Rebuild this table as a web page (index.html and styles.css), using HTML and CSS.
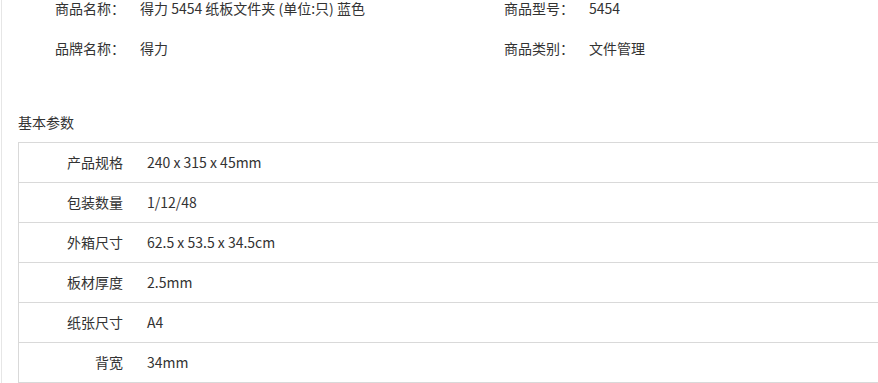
FILE: index.html
```html
<!DOCTYPE html>
<html lang="zh">
<head>
<meta charset="utf-8">
<link rel="stylesheet" href="styles.css">
</head>
<body>
<div class="page">
  <div class="info">
    <div class="info-row">
      <div class="info-item left"><span class="info-label">商品名称：</span><span class="info-value">得力 5454 纸板文件夹 (单位:只) 蓝色</span></div>
      <div class="info-item right"><span class="info-label">商品型号：</span><span class="info-value">5454</span></div>
    </div>
    <div class="info-row">
      <div class="info-item left"><span class="info-label">品牌名称：</span><span class="info-value">得力</span></div>
      <div class="info-item right"><span class="info-label">商品类别：</span><span class="info-value">文件管理</span></div>
    </div>
  </div>
  <div class="section-title">基本参数</div>
  <div class="params">
    <div class="param-row"><div class="param-label">产品规格</div><div class="param-value">240 x 315 x 45mm</div></div>
    <div class="param-row"><div class="param-label">包装数量</div><div class="param-value">1/12/48</div></div>
    <div class="param-row"><div class="param-label">外箱尺寸</div><div class="param-value">62.5 x 53.5 x 34.5cm</div></div>
    <div class="param-row"><div class="param-label">板材厚度</div><div class="param-value">2.5mm</div></div>
    <div class="param-row"><div class="param-label">纸张尺寸</div><div class="param-value">A4</div></div>
    <div class="param-row"><div class="param-label">背宽</div><div class="param-value">34mm</div></div>
  </div>
</div>
</body>
</html>
```
FILE: styles.css
```css
html, body {
  margin: 0;
  padding: 0;
  background: #fff;
}
body {
  font-family: "Noto Sans CJK SC", "Open Sans", sans-serif;
  font-size: 14px;
  color: #333;
  overflow: hidden;
}
.page {
  margin-left: 1px;
  border-left: 1px solid #e6e6e6;
  min-height: 383px;
  padding-left: 16px;
}
.info {
  display: flex;
  flex-direction: column;
  gap: 24px;
}
.info-row {
  display: flex;
  height: 16px;
  line-height: 16px;
}
.info-item {
  display: flex;
}
.info-item.left {
  width: 449px;
  padding-left: 37px;
}
.info-label {
  width: 85px;
  flex: none;
}
.info-value {
  white-space: nowrap;
}
.section-title {
  margin-top: 56px;
  height: 20px;
  line-height: 20px;
  margin-bottom: 10px;
}
.params {
  border-left: 1px solid #d9d9d9;
  width: 900px;
}
.param-row {
  display: flex;
  height: 39px;
  box-sizing: border-box;
  padding-bottom: 2px;
  align-items: center;
  border-top: 1px solid #d9d9d9;
}
.param-row {
  height: 40px;
}
.param-row:last-child {
  height: 41px;
  border-bottom: 1px solid #d9d9d9;
}
.param-label {
  width: 104px;
  text-align: right;
  flex: none;
}
.param-value {
  padding-left: 24px;
}
```
